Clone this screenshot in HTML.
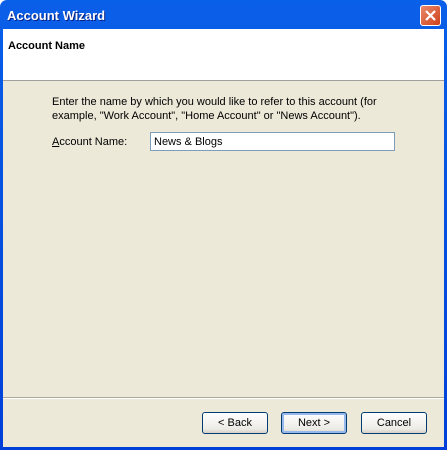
<!DOCTYPE html>
<html><head><style>
body{margin:0;width:447px;height:450px;overflow:hidden;font-family:Tahoma,"Liberation Sans",sans-serif;font-size:11px;}
.win{position:absolute;left:0;top:0;width:447px;height:450px;background:linear-gradient(#0a5fe8,#0040d8);border-radius:7px 7px 0 0;}
.title{position:absolute;left:7px;top:8px;color:#fff;font-weight:bold;font-size:13px;text-shadow:1px 1px #0a1e80;}
.close{position:absolute;left:420px;top:5px;width:19px;height:19px;border:1px solid #fff;border-radius:3px;background:linear-gradient(135deg,#e98a6c,#cf4019);}
.client{position:absolute;left:3px;top:29px;width:441px;height:418px;background:#ECE9D8;}
.hdr{position:absolute;left:0;top:0;width:441px;height:51px;background:#fff;border-bottom:1px solid #a0a0a0;}
.hdr b{position:absolute;left:5px;top:11px;font-size:11px;}
.sep{position:absolute;left:0;top:368px;width:441px;height:1px;background:#aca899;border-bottom:1px solid #fff;}
.btn{position:absolute;top:383px;width:64px;height:20px;border:1px solid #003c74;border-radius:3px;background:linear-gradient(#fff,#ecebe6 80%,#d6d0c5);text-align:center;line-height:20px;}
input{position:absolute;left:147px;top:103px;width:240px;height:17px;border:1px solid #7f9db9;font:11px Tahoma,"Liberation Sans",sans-serif;padding:0 0 0 3px;}
</style></head><body>
<div class="win">
<div class="title">Account Wizard</div>
<div class="close"><svg width="19" height="19"><path d="M5 5L14 14M14 5L5 14" stroke="#fff" stroke-width="2.2"/></svg></div>
<div class="client">
<div class="hdr"><b>Account Name</b></div>
<div style="position:absolute;left:49px;top:66px;line-height:14px">Enter the name by which you would like to refer to this account (for<br>example, "Work Account", "Home Account" or "News Account").</div>
<div style="position:absolute;left:49px;top:107px"><u>A</u>ccount Name:</div>
<input value="News &amp; Blogs">
<div class="sep"></div>
<div class="btn" style="left:199px">&lt; Back</div>
<div class="btn" style="left:278px;box-shadow:inset 0 0 0 2px #98b8ec">Next &gt;</div>
<div class="btn" style="left:358px">Cancel</div>
</div></div>
</body></html>
